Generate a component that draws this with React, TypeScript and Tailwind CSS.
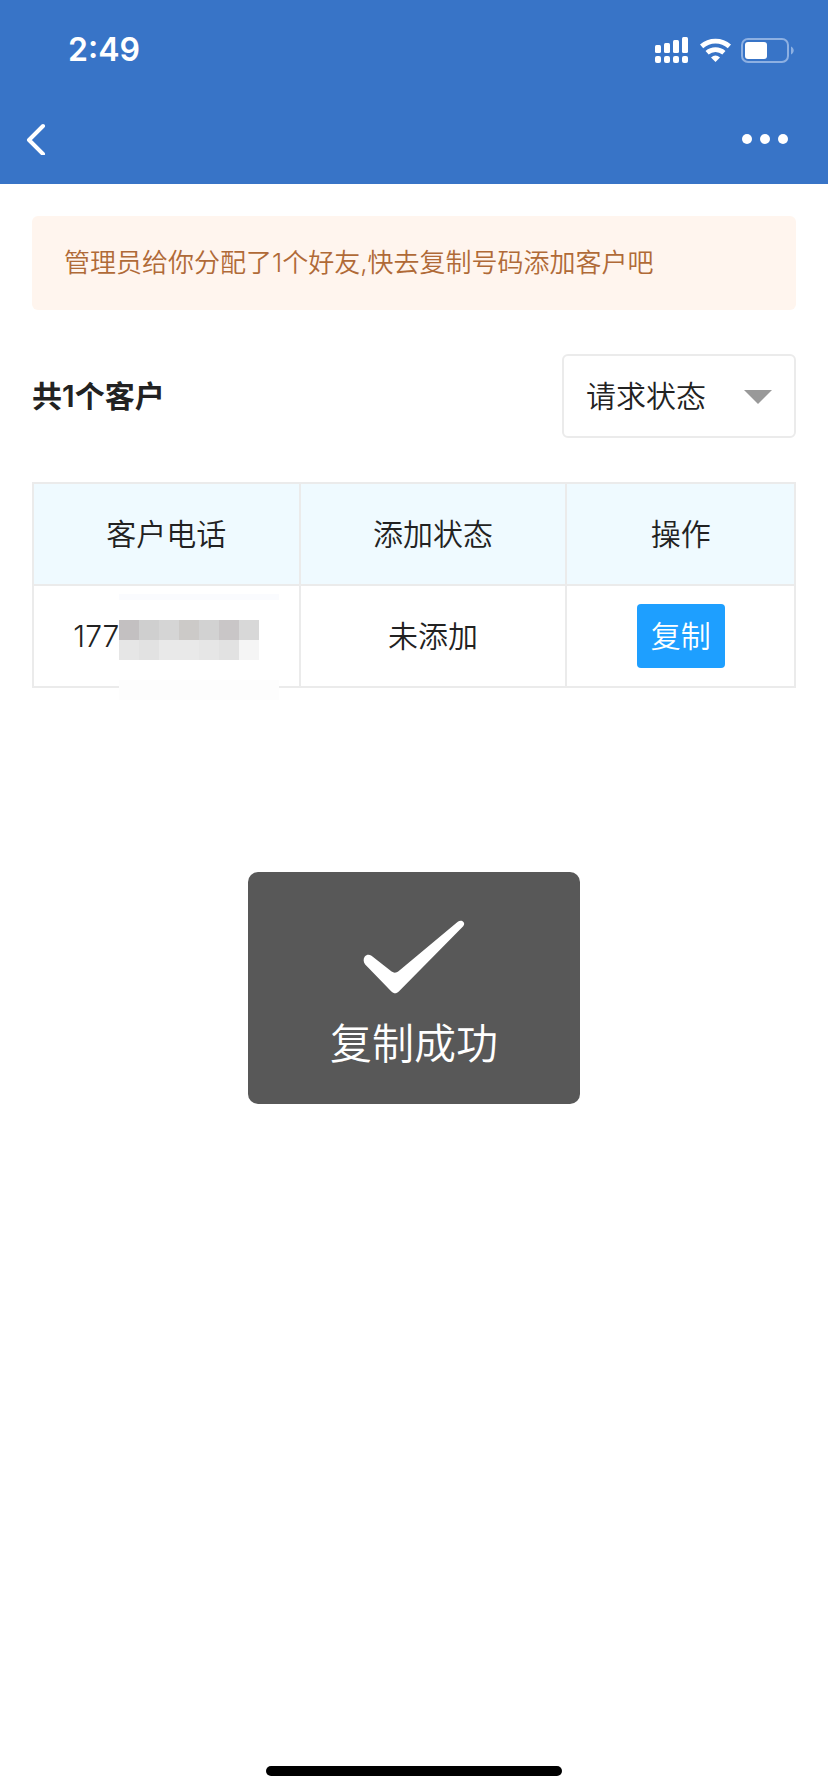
// src/pages/Customers/CustomerList.tsx
import React, { useState } from 'react';

interface Customer {
    phonePrefix: string;
    status: string;
}

const customers: Customer[] = [{ phonePrefix: '177', status: '未添加' }];

// Two rows of blocks that hide the rest of the number
const maskColors = [
    'bg-[#c3c0c1]', 'bg-[#cfcfcf]', 'bg-[#d5d5d5]', 'bg-[#cccac8]', 'bg-[#d2d2d2]', 'bg-[#c9c6c7]', 'bg-[#d8d8d8]',
    'bg-[#e6e6e6]', 'bg-[#e2e2e2]', 'bg-[#e9e9e9]', 'bg-[#e9e9e9]', 'bg-[#e6e6e6]', 'bg-[#e2e2e2]', 'bg-[#f5f5f5]',
];

const StatusBar: React.FC = () => (
    <div className="flex h-[98px] items-center justify-between pt-0.5 pr-[34px] pl-[68px]">
        <span className="text-[32px] leading-10 font-semibold">2:49</span>
        <div className="flex items-center">
            <svg className="mr-3 h-[26px] w-[33px]" viewBox="0 0 33 26" fill="currentColor" aria-hidden="true">
                <rect x="0" y="8" width="6" height="8" rx="1.5" />
                <rect x="9" y="6" width="6" height="10" rx="1.5" />
                <rect x="18" y="3" width="6" height="13" rx="1.5" />
                <rect x="27" y="0" width="6" height="16" rx="1.5" />
                <rect x="0" y="19" width="6" height="7" rx="2" />
                <rect x="9" y="19" width="6" height="7" rx="2" />
                <rect x="18" y="19" width="6" height="7" rx="2" />
                <rect x="27" y="19" width="6" height="7" rx="2" />
            </svg>
            <svg className="mr-2.5 h-6 w-[31px]" viewBox="0 0 31 24" fill="none" stroke="currentColor" aria-hidden="true">
                <path d="M1.6 8.4A20.8 20.8 0 0 1 29.4 8.4" strokeWidth="4.8" />
                <path d="M7.1 14.7A12.8 12.8 0 0 1 23.9 14.7" strokeWidth="4.8" />
                <path d="M11 19.4Q15.5 15.4 20 19.4L15.5 24Z" fill="currentColor" stroke="none" />
            </svg>
            <svg className="h-[25px] w-[53px]" viewBox="0 0 53 25" aria-hidden="true">
                <rect x="1" y="1" width="46" height="23" rx="6" fill="none" stroke="#8db0e2" strokeWidth="2" />
                <rect x="4" y="4" width="22" height="17" rx="3" fill="#fff" />
                <path d="M50 8.5C53.6 10 53.6 15 50 16.5Z" fill="#8db0e2" />
            </svg>
        </div>
    </div>
);

const NavBar: React.FC = () => (
    <div className="flex h-[86px] items-center justify-between pr-10 pb-1 pl-[26px]">
        <button type="button" aria-label="返回">
            <svg className="h-8 w-5" viewBox="0 0 20 32" fill="none" stroke="currentColor" strokeWidth="4" strokeLinecap="round" strokeLinejoin="round">
                <path d="M17 3L3 17L17 31" />
            </svg>
        </button>
        <button type="button" aria-label="更多" className="flex gap-2">
            <span className="size-2.5 rounded-full bg-white" />
            <span className="size-2.5 rounded-full bg-white" />
            <span className="size-2.5 rounded-full bg-white" />
        </button>
    </div>
);

const PhoneCell: React.FC<{ prefix: string }> = ({ prefix }) => (
    <div className="flex items-center justify-center">
        <span>{prefix}</span>
        <div className="relative mt-2 grid grid-cols-7">
            {maskColors.map((color, index) => (
                <span key={index} className={`size-5 ${color}`} />
            ))}
            <span className="absolute -top-[26px] left-0 h-1.5 w-40 bg-[#fafbfe]" />
            <span className="absolute top-[60px] left-0 h-5 w-40 bg-[#fdfdfd]" />
        </div>
    </div>
);

const Toast: React.FC<{ message: string }> = ({ message }) => (
    <div className="pointer-events-none fixed inset-x-0 top-[184px] bottom-0 flex items-center justify-center">
        <div role="status" className="flex h-[232px] w-[332px] flex-col items-center rounded-[10px] bg-[#585858] pt-12 text-white">
            <svg className="h-[74px] w-[102px]" viewBox="0 0 102 74" fill="currentColor" aria-hidden="true">
                <path d="M8.5 35.8C6 34 3.6 34.4 1.8 36.6C.2 38.8.2 42 2.2 44.4L28.4 71.4C30.8 73.8 33.4 73.8 35.8 71.4L100.2 6.2C101.8 4.4 101.4 2.2 99.6 1.2C98 .4 96.4.6 94.8 1.8L35.8 51C33.2 53 31 53.2 28.6 51.6Z" />
            </svg>
            <p className="mt-5 text-[42px] leading-[60px]">{message}</p>
        </div>
    </div>
);

const CustomerList: React.FC = () => {
    const [status, setStatus] = useState('');
    const [message, setMessage] = useState('复制成功');

    return (
        <div className="flex min-h-screen flex-col bg-white font-['Inter','Noto_Sans_CJK_SC',sans-serif] font-[350] text-[#222]">
            <header className="bg-[#3874c7] text-white">
                <StatusBar />
                <NavBar />
            </header>

            <main className="flex-1 px-8 pt-8">
                <p className="rounded-md bg-[#fff5ee] px-8 py-7 text-[26px] leading-[38px] text-[#b06a37]">
                    管理员给你分配了1个好友,快去复制号码添加客户吧
                </p>

                <div className="mt-11 flex items-center justify-between">
                    <h1 className="text-[30px] leading-10 font-semibold">共{customers.length}个客户</h1>
                    <div className="relative">
                        <select
                            aria-label="请求状态"
                            value={status}
                            onChange={(e) => setStatus(e.target.value)}
                            className="h-[84px] w-[234px] appearance-none rounded-md border-2 border-[#ebebeb] bg-white px-[22px] text-[30px]"
                        >
                            <option value="">请求状态</option>
                            <option value="pending">未添加</option>
                        </select>
                        <svg className="pointer-events-none absolute top-9 right-6 h-3.5 w-7" viewBox="0 0 28 14" fill="#999" aria-hidden="true">
                            <path d="M0 0H28L14 14Z" />
                        </svg>
                    </div>
                </div>

                <table className="mt-11 w-full table-fixed border-collapse text-center text-[30px] leading-10">
                    <thead>
                        <tr className="h-[102px] bg-[#effaff]">
                            <th className="w-[35%] border-2 border-[#ebebeb] font-[350]">客户电话</th>
                            <th className="w-[35%] border-2 border-[#ebebeb] font-[350]">添加状态</th>
                            <th className="w-[30%] border-2 border-[#ebebeb] font-[350]">操作</th>
                        </tr>
                    </thead>
                    <tbody>
                        {customers.map((customer) => (
                            <tr key={customer.phonePrefix} className="h-[102px]">
                                <td className="border-2 border-[#ebebeb]">
                                    <PhoneCell prefix={customer.phonePrefix} />
                                </td>
                                <td className="border-2 border-[#ebebeb]">{customer.status}</td>
                                <td className="border-2 border-[#ebebeb]">
                                    <button
                                        type="button"
                                        onClick={() => setMessage('复制成功')}
                                        className="h-16 w-[88px] rounded bg-[#1e9fff] align-middle text-white"
                                    >
                                        复制
                                    </button>
                                </td>
                            </tr>
                        ))}
                    </tbody>
                </table>
            </main>

            <footer className="flex justify-center pb-4">
                <div className="h-2.5 w-[296px] rounded-full bg-black" />
            </footer>

            {message && <Toast message={message} />}
        </div>
    );
};

export default CustomerList;
